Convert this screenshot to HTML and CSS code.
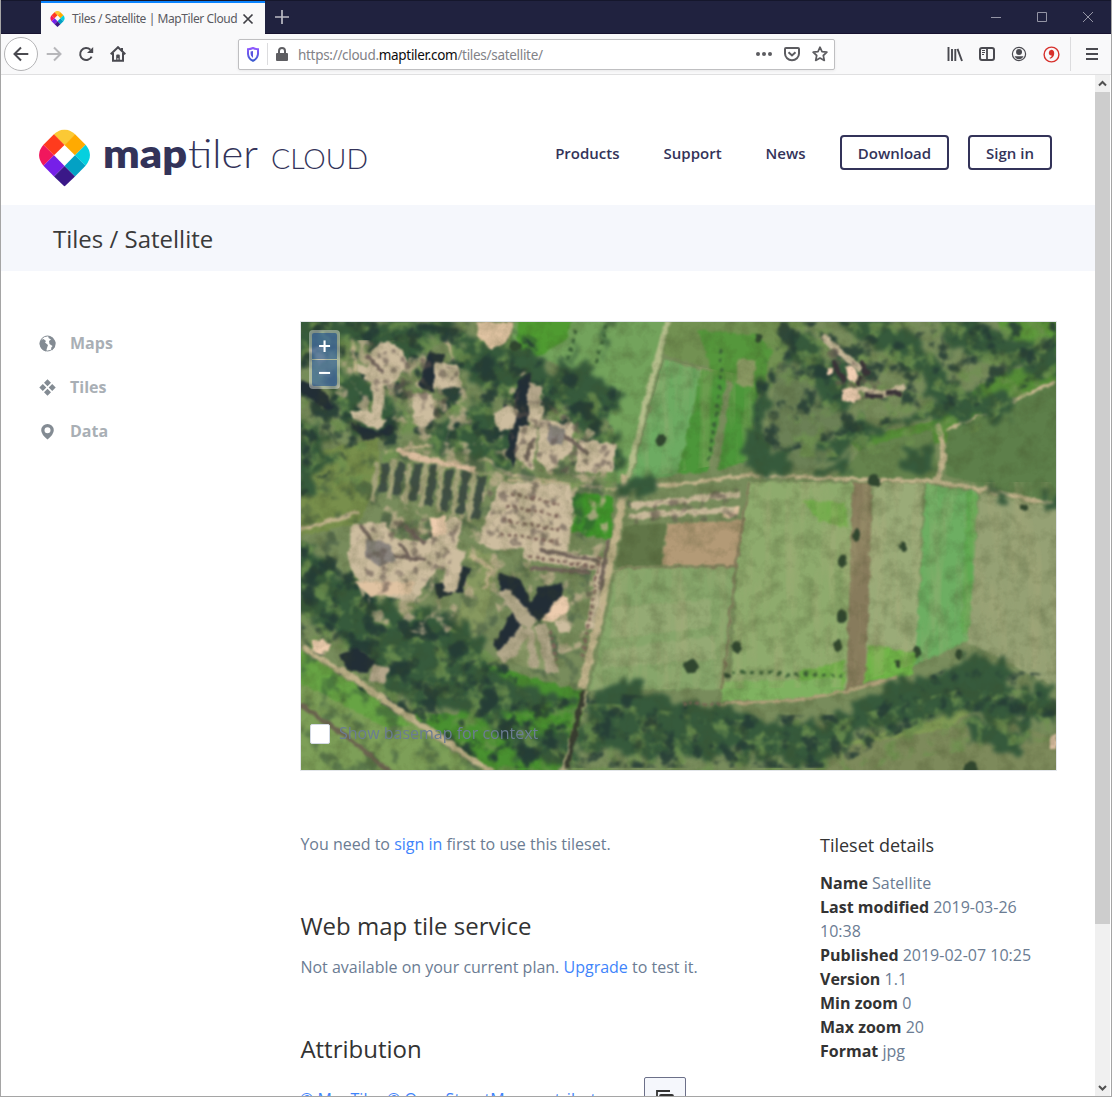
FILE: index.html
```html
<!DOCTYPE html>
<html lang="en">
<head>
<meta charset="utf-8">
<title>Tiles / Satellite | MapTiler Cloud</title>
<link rel="stylesheet" href="styles.css">
</head>
<body>
<svg width="0" height="0" class="defs" aria-hidden="true">
  <symbol id="pin" viewBox="0 0 50 56">
    <path fill="#fbc935" d="M14.6 4.7a23 23 0 0 1 20.8 0L25 15z"/>
    <path fill="#fbc935" d="M14.6 4.7Q25-4.5 35.4 4.7L25 15.2z"/>
    <path fill="#ff3b1d" d="M14.6 4.7 25 15.2 14.7 25.4 4.3 15z"/>
    <path fill="#ffaa01" d="M35.4 4.7 45.7 15 35.3 25.4 25 15.2z"/>
    <path fill="#f1175d" d="M4.3 15 14.7 25.4 4.3 35.7Q-4.3 25 4.3 15z"/>
    <path fill="#05d0df" d="M45.7 15 35.3 25.4 45.7 35.7Q54.3 25 45.7 15z"/>
    <path fill="#761fe8" d="M14.7 25.4 25 35.8 14.7 46.1 4.3 35.7z"/>
    <path fill="#03a1c4" d="M35.3 25.4 45.7 35.7 35.3 46.1 25 35.8z"/>
    <path fill="#3a1888" d="M25 35.8 35.3 46.1 25 56 14.7 46.1z"/>
  </symbol>
</svg>
<div class="window">
  <header class="titlebar">
    <div class="tab">
      <svg class="favicon" width="15" height="16"><use href="#pin"/></svg>
      <span class="tab-title">Tiles / Satellite | MapTiler Cloud</span>
      <svg class="tab-close" width="12" height="12" viewBox="0 0 12 12"><path d="M1.5 1.5l9 9m0-9l-9 9" stroke="#3f3f45" stroke-width="1.7"/></svg>
    </div>
    <svg class="new-tab" width="14" height="14" viewBox="0 0 14 14"><path d="M7 0v14M0 7h14" stroke="#bcbcc5" stroke-width="1.7"/></svg>
    <div class="window-controls">
      <svg width="10" height="10" viewBox="0 0 10 10"><path d="M0 5.5h10" stroke="#9495a5"/></svg>
      <svg width="10" height="10" viewBox="0 0 10 10"><path d="M.5.5h9v9h-9z" fill="none" stroke="#9495a5"/></svg>
      <svg width="10" height="10" viewBox="0 0 10 10"><path d="M0 0l10 10M10 0L0 10" stroke="#9495a5"/></svg>
    </div>
  </header>
  <nav class="toolbar">
    <span class="back"><svg width="16" height="16" viewBox="0 0 16 16"><path d="M15.3 8H1.5M8 1.5L1.5 8 8 14.5" fill="none" stroke="#4a4a50" stroke-width="2"/></svg></span>
    <svg class="forward" width="16" height="16" viewBox="0 0 16 16"><path d="M.7 8h13.8M8 1.5L14.5 8 8 14.5" fill="none" stroke="#b7b7ba" stroke-width="2"/></svg>
    <svg class="reload" width="16" height="16" viewBox="0 0 16 16"><path d="M13.6 10.6A6 6 0 1 1 12.4 3.8" fill="none" stroke="#4a4a50" stroke-width="2"/><path d="M15.2 1v6H9z" fill="#4a4a50"/></svg>
    <svg class="home" width="16" height="16" viewBox="0 0 16 16"><path d="M.7 8.2L8 1.2l7.3 7M3 7v7.8h10V7" fill="none" stroke="#4a4a50" stroke-width="2"/><path d="M6.2 15V9.5q0-1 1-1h1.6q1 0 1 1V15H8.4v-3h-.9v3zM11 2h2v4l-2-2z" fill="#4a4a50"/></svg>
    <div class="urlbar">
      <svg class="shield" width="12" height="15" viewBox="0 0 12 15"><defs><linearGradient id="sg" x2="0" y2="1"><stop stop-color="#9059ff"/><stop offset="1" stop-color="#3b5bd0"/></linearGradient></defs><path d="M6 1Q8.500 2.200 11 2.300V7Q10.500 12 6 13.800 1.500 12 1 7V2.300Q3.500 2.200 6 1z" fill="#fff" stroke="url(#sg)" stroke-width="2"/><path d="M6 4v7Q3.800 9.500 3.600 7V4.500z" fill="#5a55df"/></svg>
      <i class="divider"></i>
      <svg class="lock" width="12" height="14" viewBox="0 0 12 14"><path d="M3 7V4a3 3 0 0 1 6 0v3" fill="none" stroke="#5e5e62" stroke-width="2"/><rect y="6" width="12" height="8" rx="1" fill="#5e5e62"/></svg>
      <span class="url">https://cloud.<b>maptiler.com</b>/tiles/satellite/</span>
      <span class="url-actions">
        <svg width="16" height="16" viewBox="0 0 16 16" fill="#5c5c60"><circle cx="2" cy="8" r="2"/><circle cx="8" cy="8" r="2"/><circle cx="14" cy="8" r="2"/></svg>
        <svg width="16" height="16" viewBox="0 0 16 16" fill="none" stroke="#5c5c60" stroke-width="2"><path d="M2 2h12q1 0 1 1v4.500a7 6.700 0 0 1-14 0V3q0-1 1-1z"/><path d="M4.500 6.200L8 9.500l3.500-3.300"/></svg>
        <svg width="16" height="16" viewBox="0 0 16 16" fill="none" stroke="#5c5c60" stroke-width="1.700" stroke-linejoin="round"><path d="M8 1.200l2 4.500 4.900.5-3.600 3.300 1 4.900L8 12l-4.300 2.400 1-4.900L1.100 6.200 6 5.700z"/></svg>
      </span>
    </div>
    <div class="tools">
      <svg width="16" height="16" viewBox="0 0 16 16"><path d="M1.500 1v14M5 3v12M8.300 3v12M10.500 2.800L15 15" stroke="#4a4a50" stroke-width="1.900"/></svg>
      <svg width="16" height="16" viewBox="0 0 16 16" fill="none" stroke="#4a4a50"><rect x="1" y="2" width="14" height="12" rx="2" stroke-width="2"/><path d="M8 2v12" stroke-width="1.800"/><path d="M3 4.500h3M3 6.500h3M3 8.500h2"/></svg>
      <svg width="16" height="16" viewBox="0 0 16 16"><circle cx="8" cy="8" r="6.600" fill="none" stroke="#4a4a50" stroke-width="1.200"/><circle cx="8" cy="6" r="3" fill="#4a4a50"/><path d="M3.500 10.300h9Q11 13.300 8 13.300T3.500 10.300z" fill="#4a4a50"/></svg>
      <svg width="17" height="17" viewBox="0 0 17 17"><circle cx="8.500" cy="8.500" r="7.400" fill="none" stroke="#d7312c" stroke-width="1.400"/><path d="M8.300 3.800q2.900.1 2.900 3.700 0 4.100-4.200 5.200l-.4-1q2-.7 2.200-2.300-3 .2-3-2.700 0-2.600 2.500-2.900z" fill="#d7312c"/></svg>
      <i class="divider"></i>
      <svg width="12" height="14" viewBox="0 0 12 14"><path d="M0 2h12M0 7h12M0 12h12" stroke="#4a4a50" stroke-width="1.800"/></svg>
    </div>
  </nav>
  <div class="viewport">
    <div class="page">
      <header class="site-header">
        <svg class="logo" width="330" height="58" viewBox="0 0 330 58">
          <use href="#pin" y="-.5" width="51" height="57"/>
          <text class="logo-map" x="64" y="38" textLength="84" lengthAdjust="spacingAndGlyphs">map</text>
          <text class="logo-tiler" x="149" y="38" textLength="70" lengthAdjust="spacingAndGlyphs">tiler</text>
          <text class="logo-cloud" x="232" y="38.500" textLength="97" lengthAdjust="spacingAndGlyphs">CLOUD</text>
        </svg>
        <nav class="site-nav">
          <a class="link">Products</a><a class="link">Support</a><a class="link">News</a>
          <a class="button">Download</a><a class="button">Sign in</a>
        </nav>
      </header>
      <h1 class="page-title">Tiles / Satellite</h1>
      <div class="layout">
        <ul class="sidebar">
          <li><svg width="17" height="17" viewBox="0 0 17 17"><circle cx="8.500" cy="8.500" r="7.500" fill="#fff" stroke="#838b93" stroke-width="1"/><path fill="#838b93" d="M1 6.500Q2.500 4 4.500 4L7 6l-1 1.500 3 2.500-1 3-1 3.500Q1.500 15 .700 9zM9.500 1l4 1.500 3 4.500-.5 5-3 3.500-1-2.500 1.500-2-3-2-.5-3 2-1.500-2.500-1.500z"/></svg>Maps</li>
          <li><svg width="17" height="17" viewBox="0 0 17 17" fill="#838b93"><path d="M8.500.3l3.500 3.500-3.500 3.500L5 3.800zM3.800 5l3.500 3.500L3.800 12 .3 8.500zM13.200 5l3.500 3.500-3.500 3.500-3.500-3.500zM8.500 9.700l3.500 3.500-3.500 3.500L5 13.200z"/></svg>Tiles</li>
          <li><svg width="17" height="17" viewBox="0 0 17 17"><path fill="#838b93" fill-rule="evenodd" d="M8.500 1A6.300 6.300 0 0 1 14.800 7.300Q14.800 11.500 8.500 16.500 2.200 11.500 2.200 7.300A6.300 6.300 0 0 1 8.500 1zm0 3.300a3 3 0 1 0 0 6 3 3 0 0 0 0-6z"/></svg>Data</li>
        </ul>
        <main>
          <div class="map">
            <svg class="imagery" width="755" height="448" viewBox="301 322 755 448">
              <defs>
                <filter id="rough" color-interpolation-filters="sRGB" x="-5%" y="-5%" width="110%" height="110%"><feTurbulence type="fractalNoise" baseFrequency=".07" numOctaves="3" seed="4"/><feDisplacementMap in="SourceGraphic" scale="30" xChannelSelector="R" yChannelSelector="G"/><feGaussianBlur stdDeviation="2.200"/></filter>
                <filter id="soft" color-interpolation-filters="sRGB" x="-5%" y="-5%" width="110%" height="110%"><feTurbulence type="fractalNoise" baseFrequency=".12" numOctaves="2" seed="9"/><feDisplacementMap in="SourceGraphic" scale="6" xChannelSelector="R" yChannelSelector="G"/><feGaussianBlur stdDeviation="1.200"/></filter>
                <filter id="canopy" color-interpolation-filters="sRGB" x="0" y="0" width="100%" height="100%"><feTurbulence type="fractalNoise" baseFrequency=".05" numOctaves="4" seed="21"/><feColorMatrix values="0 0 0 0 .14  0 0 0 0 .23  0 0 0 0 .21  6 0 0 0 -3.100" result="n"/><feComposite in="n" in2="SourceGraphic" operator="in"/><feGaussianBlur stdDeviation="1.200"/></filter>
                <filter id="foliage" color-interpolation-filters="sRGB" x="0" y="0" width="100%" height="100%"><feTurbulence type="fractalNoise" baseFrequency=".06" numOctaves="4" seed="51"/><feColorMatrix values="0 0 0 0 .43  0 0 0 0 .57  0 0 0 0 .31  0 0 5 0 -2.500" result="n"/><feComposite in="n" in2="SourceGraphic" operator="in"/><feGaussianBlur stdDeviation="1.200"/></filter>
                <filter id="glints" color-interpolation-filters="sRGB" x="0" y="0" width="100%" height="100%"><feTurbulence type="fractalNoise" baseFrequency=".07" numOctaves="3" seed="33"/><feColorMatrix values="0 0 0 0 .76  0 0 0 0 .69  0 0 0 0 .57  0 7 0 0 -3.800" result="n"/><feComposite in="n" in2="SourceGraphic" operator="in"/><feGaussianBlur stdDeviation="1"/></filter>
                <filter id="shade" color-interpolation-filters="sRGB" x="0" y="0" width="100%" height="100%"><feTurbulence type="fractalNoise" baseFrequency=".1" numOctaves="3" seed="77"/><feColorMatrix values="0 0 0 0 .38  0 0 0 0 .33  0 0 0 0 .31  0 6 0 0 -3.200" result="n"/><feComposite in="n" in2="SourceGraphic" operator="in"/><feGaussianBlur stdDeviation="1"/></filter>
                <filter id="grain" color-interpolation-filters="sRGB" x="0" y="0" width="100%" height="100%"><feTurbulence type="fractalNoise" baseFrequency=".06" numOctaves="4" seed="7"/><feColorMatrix values="0 0 0 0 .24  0 0 0 0 .28  0 0 0 0 .14  0 2 0 0 -.85"/></filter>
                <filter id="furrows" color-interpolation-filters="sRGB" x="0" y="0" width="100%" height="100%"><feTurbulence type="fractalNoise" baseFrequency=".07 .012" numOctaves="3" seed="5"/><feColorMatrix values="0 0 0 0 .7  0 0 0 0 .68  0 0 0 0 .5  0 3 0 0 -1.300" result="n"/><feComposite in="n" in2="SourceGraphic" operator="in"/></filter>
              </defs>
              <rect x="301" y="322" width="755" height="448" fill="#788c5c"/>
              <!-- fields -->
              <g filter="url(#soft)">
                <path fill="#73a35c" d="M515 318h155l-44 166-22-4 10-50-45-60-60-25z"/>
                <path fill="#4f9b31" d="M518 318h55l-8 22-30 18-18-8z"/>
                <path fill="#729152" d="M671 318h130l-30 70-108-34z"/>
                <path fill="#6dab62" d="M664 360l38 10-24 104-48 10z"/>
                <path fill="#4c973a" d="M702 370l26 4-20 98-30 2zM733 374l28 4-12 82-30 10z"/>
                <path fill="#55973c" d="M698 330l60 5 15 14-12 45-48-20z"/>
                <path fill="#a09972" d="M738 358l18 4-3 26-17-3z" opacity=".7"/>
                <path fill="#6b8056" d="M778 362l34-6 15 34 28 30-15 27-30 24-48 0z"/>
                <path fill="#558d37" d="M850 440l85-20 60-45 63-18v40l-105 44-90 14z"/>
                <path fill="#65834d" d="M866 446l66-17 8 50-108 0z"/>
                <path fill="#5d7f4a" d="M947 430l50-22 61-28v126l-70-19-42-12z"/>
                <path fill="#5d9a3b" d="M995 318h64v36l-50-12z"/>
                <path fill="#8eab6d" d="M748 482l105 1-6 205-60 5-56-10 6-110z"/>
                <path fill="#6eae45" d="M802 500l42 3 4 25-28-7z" opacity=".8"/>
                <path fill="#877b5c" d="M853 483h19l-4 200-22 8z"/>
                <path fill="#9aab78" d="M873 483h50l-6 165-51 20z"/>
                <path fill="#6dae62" d="M926 484l52 8-8 148-55 25z"/>
                <path fill="#54a440" d="M967 492l10 2-8 138-8 2z" opacity=".5"/>
                <path fill="#95a174" d="M980 492l78 17v180l-90-46z"/>
                <path fill="#617648" d="M624 526l42-3-4 42-46 2z"/>
                <path fill="#b39a76" d="M668 524l76-4-8 46-74-1z"/>
                <path fill="#87a66b" d="M618 567l118-1-12 124-134 0z"/>
                <path fill="#9dae79" d="M612 607l100-8-2 28-100 12zM604 650l110-14 2 24-114 8z" opacity=".6"/>
                <path fill="#6fb148" d="M800 672l44-12-1 34-50-4z"/>
                <path fill="#70b548" d="M870 645l48 8-6 22-49 8z"/>
                <path fill="#7fb260" d="M722 682l118-4 2 15-65 8-56 0z"/>
                <path fill="#7d8a5b" d="M817 772l44-34 75-16 38-18 45 22 39 14v32z"/>
                <path fill="#85a354" d="M862 738l72-18 32-17 12 2-30 24-120 20z" opacity=".7"/>
                <path fill="#7d9f58" d="M298 648l90 56 92 68H298z"/>
                <path fill="#67a444" d="M298 650l66 40 48 36-25 2-88-46z"/>
                <path fill="#499130" d="M478 660l55 18 53 14-8 36-20 44h-70l-75-58 45 0z"/>
                <path fill="#3f942a" d="M577 493l36 3-2 44-42-9-4-22z"/>
                <path fill="#788f4c" d="M308 455l70-18 4 42-25 45-56 12v-45z"/>
                <path fill="#86985f" d="M468 548l30 8-5 24-10 50-28 20z"/>
              </g>
              <path filter="url(#furrows)" opacity=".3" d="M748 482h308v190l-120-15-90 30-256 3 20-120 120-4zM664 360l96 18-12 82-118 20z"/>
              <!-- tracks -->
              <g filter="url(#soft)" fill="none" stroke="#c1b38c">
                <path stroke-width="6" stroke="#b4bd8b" d="M668 320l-20 74-20 84"/>
                <path stroke-width="8" d="M625 475q-3 40-12 72l-13 65-18 75"/>
                <path stroke-width="4" d="M622 488l68-5 58-8 104 4 80 2 52 9 72 15"/>
                <path stroke-width="6" d="M938 425q12 42-4 55"/>
                <path stroke-width="3" d="M1056 382l-70 30-40 18M506 480l80 6 40 4"/>
                <path stroke-width="4" d="M300 530l60-18M320 590l48 50M350 325l8 55M440 325l20 45M383 452l80-12 45 34 65 12M470 555l22 14-8 20"/>
                <path stroke-width="2" stroke="#7d7457" d="M618 568l118-2-14 124M735 570l14-88"/>
                <path stroke-width="3" stroke="#b4a27d" d="M720 704l70-3 58-10 50-14"/>
              </g>
              <!-- woodland -->
              <g filter="url(#rough)" fill="#365a3c">
                <path d="M297 318h160l-5 18-20 5-15 22-20 10-20-22-28-14-20 12-30 18z"/>
                <path d="M297 420l24 8 12 30-13 20-10 14h-14zM336 370l30 5 14 18 25 24-15 18-38-5-14-20z"/>
                <path d="M455 336l40 8 24-3 18 12 20 20 52 14 10 18-22 24-14 4-28-28-26-8-12 2-32-10-30-18z"/>
                <path d="M560 362l28 3 22 22 10 6-5 15-24-3-18-14-18-5z"/>
                <path d="M425 434l40-18 10-22 26 26 14 40-10 8-56-20z"/>
                <path d="M582 430l22-2 20 20-9 26-18-6-4-26z"/>
                <path d="M785 335l25-6 16 20-5 25-35-8zM815 372l36-10 14 6-14 15 2 20-20 8-16-14z"/>
                <path d="M828 318h42l50 22 28 34 18 18 50 2-5 22-48 4-68 4-60 34-16-4 8-18 34-16 44-2 32-18-24-28-42-30z"/>
                <path d="M938 318h40l14 14 66 12v34l-36-6-70-22z"/>
                <path d="M758 385l14 0-5 34 6 32 18 6 2 18-40-2-8-16z"/>
                <path d="M816 464l34-6v18h-32zM902 452l32-2-2 24-20 4zM934 435l6 38-8-4zM986 488l24 0-2 15-18-4zM1042 492l18 3v10h-16z"/>
                <path d="M297 545l18 6 30 28 36 15 22 20 30-8 55 36 0 60-44 8-20-24-28-8-54-38-45-30z"/>
                <path d="M376 652l52 10 25 30-10 24-50-20-18-16zM480 665l70 30 30 4-5 14-75-8 22 30 38 0 22 12-8 20-55-5-26-35-25-17z"/>
                <path d="M600 690l15-8 25 1 25 18 55 5 50 14 60 2 18-15 36-24 52-7 38-22 32 6 8 42 16-18 24-2v44l-20-4-42 0-32-15-58 22-42 0-20 25-25 12-55-8-140-2-42-10z"/>
                <path d="M968 722l34 0 4 8 22 10-15 14-26-8-20-5zM1016 708l18 10-4 18-15-5z"/>
                <path d="M572 330l6 30-6 12zM602 324l8 0-10 44zM573 500l6 24-10-7z"/>
                <path d="M622 480l36 4-8 14-30 0z"/>
              </g>
              <path filter="url(#foliage)" opacity=".8" d="M301 322h210v40l110 40v90H301zM760 322h296v50l-80 60-120 25-60 0zM301 540l90 50 95 60 50 50 90 5 100 15 110 0 120-30 100 0v50l-160 20-60 33H490L360 690l-59-50z"/>
              <path filter="url(#canopy)" opacity=".85" d="M301 322h110l70 10 45 5 30 30 60 20-5 60-15 25-125-35-110 10-60 50zM780 322h276v54l-80 30-100 20-120 35 0-80zM301 540l90 50 95 60 60 40 90 5 90 20 110 0 120-50 100 10v40l-40 10-60-20-60 30-60 33H490L360 690l-59-50z"/>
              <path filter="url(#canopy)" opacity=".4" d="M301 322h210l60 40 50 30-15 90-20 120-10 90-5 80H301z"/>
              <!-- light clearings and paving -->
              <path filter="url(#glints)" opacity=".75" d="M355 340l60 0 50 50 20 60 20-60 20-20 30 40 55 30-5 50 5 60-10 90-80 30-30-80-50 50-70-20-20-60 40-60 20-60-80-50-30-40z"/>
              <g filter="url(#soft)" fill="none">
                <path stroke="#c1b38c" stroke-width="6" d="M303 648l50 30 50 35 90 60"/>
                <path stroke="#6b6350" stroke-width="5" d="M299 704l50 34 42 36"/>
                <path stroke="#b8b088" stroke-width="4" d="M587 690l-10 30-14 52"/>
                <path stroke="#383c30" stroke-width="5" d="M584 690l-6 26-11 52"/>
              </g>
              <!-- settlement -->
              <g filter="url(#soft)">
                <g fill="#222e36">
                  <path d="M430 350l14 5-10 38-16-8zM518 380l12-8 4 24-9 42-12 28-6-10 6-50zM503 404l14 6-2 18-16-8zM301 380l20 8 14 20-10 2-26-20zM350 422l28 10 15-8v10l-30 6z"/>
                  <path d="M339 655l18-8 18 14-8 12-20-2zM436 584l22-4 4-14 8 2-8 24-24 6z"/>
                </g>
                <g fill="#cdbd9f">
                  <path d="M372 350l14-10 16 10 5 16-12 16-14 6-16-10 4-18zM356 364l14 4 2 8-12-2zM352 412l16-2 12 8 8 2-10 10-24-10zM371 380l14 8-4 32-8-4zM434 362l24 4 4 20-28 4z"/>
                  <path d="M412 394l20 0 4 24-14 10-8-6zM493 414l14-8 12 4-6 18-14 4zM530 404l14 2-4 20-12-3zM519 425l18 4-4 42-18-14zM540 420l34 5-2 26-24 20-12-12zM578 440l38 4-3 28-38 0z"/>
                  <path d="M500 482l70 2 4 24-6 44-40-4-34 2-16-6z"/>
                  <path d="M352 524l34-2 4 16 34 4 28-26 10 6-8 40-16 6-24 34-50-10-16-30z"/>
                  <path d="M448 548l18 2-10 44-14-4zM524 546l84 12-14 70-8 0 10-58-72-10zM555 620l14 2 2 10-12 0z"/>
                </g>
                <g fill="#b4a68b">
                  <path d="M528 382l14 4-2 22-12-2z"/>
                  <path d="M373 664l16 4-4 16-16-4z"/>
                </g>
                <path fill="#e0c3a2" d="M355 582l60 0-4 12-40 2zM476 322h38l-8 20-14 8-14-14zM722 508l18-2-2 10-16 1z"/>
                <path fill="none" stroke="#c8b99a" stroke-width="6" d="M822 336l25 22 15 12M855 388l28 6 22-8M630 506l110-12M628 516l106-6"/>
                <path fill="none" stroke="#72645b" stroke-width="4" d="M360 524l20 30 46 6M404 526l22 18M548 428l24 12M534 438l-8 22M548 424l40 30M366 356l18 16M400 544l12 16M529 568l60 4M540 550l60 12M608 540l-8 50"/>
                <path fill="#8b8580" d="M366 540l22 2 8 18-14 6-16-8zM548 424l18 4-4 18-14-4z"/>
              </g>
              <path filter="url(#shade)" opacity=".6" d="M365 340l95 30-25 60-60-40zM520 380l20 20 78 45-6 30-90-5-15-30zM488 480l82 4-4 62-80 0zM352 524l110-8-14 60-76 20zM520 546l88 12-16 80-8-60zM628 500l116-12-8 32-106 4zM820 336l40 30 40 30-60 5z"/>
              <!-- roofs, hedges and single trees -->
              <g filter="url(#soft)">
                <path fill="#222d36" d="M498 572l22 8 20 38-8 4-32-32zM537 586l26-2-2 12-22 26-8-16zM492 646l20-36 12 14-20 30z"/>
                <path fill="#8a9a68" d="M520 632l20-8 18 44-26 2-26-12z"/>
                <path fill="#b3a88b" d="M498 592l12-3 27 32-8 8-8-4zM538 624l8 0 12 48-11 2-12-48zM496 654l26-28 8 6-16 26-10 4zM526 628l8 0 4 40-8 0z"/>
                <path fill="#edccae" d="M543 617l19-22 6 2 2 12-16 13-10-1zM430 518l16-2 0 18-14 2zM312 641l10-3 8 8-8 8-10-4z"/>
                <path fill="#f2cfb4" d="M845 366q11-3 13 8l-3 9-8-6zM842 390l14-3 4 10-4 7-14-4zM827 368h5v6h-5zM1050 736l7-3v16h-7z"/>
                <path fill="none" stroke="#7d6459" stroke-width="3" stroke-dasharray="4 3" d="M528 556l70 12M600 556l-10 60-8 44M550 630l8 36M510 494l50 10M506 506l54 10M502 520l58 10M500 534l58 8M682 704h38"/>
                <path stroke="#3f4e44" stroke-width="8" fill="none" d="M386 464l-4 28M402 462l-6 32M418 463l-5 37M434 465l-6 41M450 470l-6 42M466 472l-6 42M482 476l-7 42"/>
                <path stroke="#a5a37c" stroke-width="5" fill="none" d="M378 460l-6 42M394 460l-5 40M410 462l-5 42M426 462l-5 45M442 466l-5 46M458 468l-5 48M474 472l-5 50"/>
                <path stroke="#dbbd9f" stroke-width="6" fill="none" d="M397 450l15 6 48 10 16 4"/>
                <path stroke="#3a3338" stroke-width="5" fill="none" d="M833 360l6 14 7 8M860 361l8 14M864 395l20 1M886 392l16 2M862 375l-5 10"/>
                <path stroke="#3a5f38" stroke-width="3" stroke-dasharray="4 5" fill="none" d="M722 350l-2 40-8 50-4 26M607 324l-12 40M576 330l-8 30M732 672l60 2 50 2"/>
                <g fill="#30462f"><ellipse cx="661" cy="440" rx="5" ry="6"/><ellipse cx="691" cy="666" rx="8" ry="7"/><ellipse cx="737" cy="647" rx="5" ry="7"/><ellipse cx="843" cy="561" rx="5" ry="7"/><ellipse cx="842" cy="616" rx="5" ry="7"/><ellipse cx="838" cy="646" rx="4" ry="6"/><ellipse cx="903" cy="547" rx="4" ry="5"/><ellipse cx="857" cy="535" rx="4" ry="6"/><ellipse cx="917" cy="652" rx="4" ry="6"/><ellipse cx="959" cy="655" rx="4" ry="6"/><circle cx="898" cy="664" r="3"/><circle cx="874" cy="480" r="6"/><circle cx="727" cy="675" r="3"/><circle cx="971" cy="768" r="7"/><circle cx="759" cy="338" r="4"/><circle cx="516" cy="346" r="5"/><circle cx="1024" cy="508" r="4"/></g>
              </g>
              <rect x="301" y="322" width="755" height="448" filter="url(#grain)" opacity=".3"/>
            </svg>
            <div class="zoom"><button>+</button><button>−</button></div>
            <label class="basemap"><i class="checkbox"></i>Show basemap for context</label>
          </div>
          <div class="columns">
            <section class="content">
              <p>You need to <a>sign in</a> first to use this tileset.</p>
              <h2>Web map tile service</h2>
              <p>Not available on your current plan. <a>Upgrade</a> to test it.</p>
              <h2>Attribution</h2>
              <div class="attribution"><a>© MapTiler © OpenStreetMap contributors</a>
                <button class="copy"><svg width="20" height="20" viewBox="0 0 20 20" fill="none" stroke="#333" stroke-width="1.800"><path d="M2 15V3h13"/><rect x="5" y="7" width="13" height="12" rx="1"/></svg></button>
              </div>
            </section>
            <aside class="details">
              <h3>Tileset details</h3>
              <p><b>Name</b> Satellite</p>
              <p><b>Last modified</b> 2019-03-26 10:38</p>
              <p><b>Published</b> 2019-02-07 10:25</p>
              <p><b>Version</b> 1.1</p>
              <p><b>Min zoom</b> 0</p>
              <p><b>Max zoom</b> 20</p>
              <p><b>Format</b> jpg</p>
            </aside>
          </div>
        </main>
      </div>
    </div>
    <div class="scrollbar">
      <svg width="15" height="17" viewBox="0 0 15 17"><path d="M4 10.500L7.500 7l3.500 3.500" fill="none" stroke="#505050" stroke-width="2"/></svg>
      <i class="thumb"></i>
      <svg width="15" height="17" viewBox="0 0 15 17"><path d="M4 7l3.500 3.500L11 7" fill="none" stroke="#505050" stroke-width="2"/></svg>
    </div>
  </div>
</div>
</body>
</html>
```
FILE: styles.css
```css
* { box-sizing: border-box; }
body, h1, h2, h3, p, ul { margin: 0; padding: 0; }
body { font: 16px/24px "Open Sans", sans-serif; color: #6b7c93; overflow: hidden; }
svg { display: block; flex: none; }
.defs { position: absolute; }
a { color: #3f84fb; }
.window { width: 1112px; height: 1097px; display: flex; flex-direction: column; background: #fff; border: 1px solid #a5a5a5; border-top: 0; overflow: hidden; }

.titlebar { flex: none; height: 34px; display: flex; align-items: center; background: #20223f; border-top: 1px solid #15172c; border-bottom: 1px solid #171330; }
.tab { width: 224px; height: 33px; margin: 0 0 0 40px; align-self: flex-start; background: #f9f9fa; border-top: 2px solid #0a84ff; display: flex; align-items: center; padding: 0 11px 0 9px; }
.favicon { margin-right: 7px; }
.tab-title { font: 12px/18px "Noto Sans", sans-serif; letter-spacing: -.41px; color: #5a5a61; white-space: nowrap; width: 170px; }
.new-tab { margin-left: 10px; }
.window-controls { margin-left: auto; display: flex; gap: 36px; padding-right: 18px; }

.toolbar { flex: none; height: 41px; background: #f9f9fa; border-bottom: 1px solid #e0e0e1; display: flex; align-items: center; padding-left: 3px; }
.back { width: 34px; height: 34px; border: 1px solid #b4b4b6; border-radius: 50%; background: #fff; display: flex; align-items: center; justify-content: center; }
.forward { margin-left: 8px; }
.reload, .home { margin-left: 16px; }
.urlbar { margin-left: 112px; width: 597px; height: 31px; background: #fff; border: 1px solid #bfbfc1; border-radius: 2px; box-shadow: 0 1px 3px #0001; display: flex; align-items: center; padding: 0 6px 0 8px; }
.divider { width: 1px; background: #dcdcde; }
.urlbar .divider { height: 22px; margin: 0 8px; }
.url { margin-left: 10px; font: 13.500px/20px "Noto Sans", sans-serif; letter-spacing: -.3px; color: #828287; white-space: nowrap; padding-top: 1px; }
.url b { font-weight: 400; color: #0c0c0d; }
.url-actions { margin-left: auto; display: flex; gap: 12px; }
.tools { margin-left: auto; display: flex; align-items: center; gap: 16px; padding-right: 13px; }
.tools .divider { height: 34px; margin: 0 -1px 0 -6px; }

.viewport { flex: 1; min-height: 0; display: flex; }
.page { width: 1094px; overflow: hidden; }
.scrollbar { width: 15px; background: #f0f0f0; display: flex; flex-direction: column; }
.thumb { height: 832px; background: #cdcdcd; margin-bottom: auto; }

.site-header { height: 130px; display: flex; padding: 55px 43px 0 38px; }
.logo { overflow: visible; font-family: Lato, sans-serif; fill: #333359; }
.logo-map { font-size: 40px; font-weight: 800; }
.logo-tiler { font-size: 40px; font-weight: 300; }
.logo-cloud { font-size: 28px; font-weight: 300; }
.site-nav { margin-left: auto; height: 35px; margin-top: 5px; display: flex; align-items: center; font-size: 15px; font-weight: 600; color: #333359; }
.site-nav a { color: inherit; white-space: nowrap; }
.site-nav .link { margin-right: 44px; }
.site-nav .link:nth-child(3) { margin-right: 34.500px; }
.button { height: 35px; border: 2px solid #333359; border-radius: 4px; width: 109px; text-align: center; line-height: 32px; }
.button + .button { width: 84px; margin-left: 19px; }
.page-title { height: 66px; background: #f5f7fc; padding: 1px 0 0 52px; font-size: 24px; line-height: 66px; font-weight: 400; color: #3a3a3a; }
.layout { display: grid; grid-template-columns: 261px 757px; padding: 50px 0 0 38px; }
.sidebar { list-style: none; font-weight: 700; color: #a9afb5; }
.sidebar li { display: flex; align-items: center; height: 44px; gap: 14px; }

.map { position: relative; height: 450px; border: 1px solid #e3e6ea; overflow: hidden; }
.zoom { position: absolute; left: 8px; top: 8px; padding: 3px; background: rgba(255,255,255,.4); border-radius: 4px; display: grid; gap: 1px; }
.zoom button { width: 25px; height: 26px; border: 0; padding: 0; color: #fff; background: rgba(0,60,136,.5); font: 600 23px/24px "Open Sans", sans-serif; }
.zoom button:first-child { border-radius: 2px 2px 0 0; }
.zoom button:last-child { border-radius: 0 0 2px 2px; padding-bottom: 3px; }
.basemap { position: absolute; left: 9px; bottom: 24px; display: flex; align-items: center; gap: 9px; line-height: 22px; padding-bottom: 2px; }
.checkbox { width: 20px; height: 20px; background: #fff; border: 1px solid #d3d9e3; border-radius: 2px; position: relative; top: 1px; }

.columns { display: grid; grid-template-columns: 386px 237px; justify-content: space-between; padding-top: 61px; }
.content { white-space: nowrap; }
.content p, .content h2 { padding-left: .4px; }
h2 { font-size: 24px; line-height: 36px; font-weight: 400; color: #333; }
.content h2 { margin: 52px 0 11px; }
.attribution { display: flex; justify-content: space-between; align-items: flex-start; }
.attribution a { padding-top: 9px; width: 297px; overflow: hidden; }
.copy { width: 42px; height: 42px; margin: -1px 0 0; border: 1px solid #6c7089; border-radius: 2px; background: #f5f7fc; display: flex; align-items: center; justify-content: center; }
h3 { font-size: 18px; line-height: 26px; font-weight: 400; color: #333; margin-bottom: 13px; }
.details b { color: #333; }
```
